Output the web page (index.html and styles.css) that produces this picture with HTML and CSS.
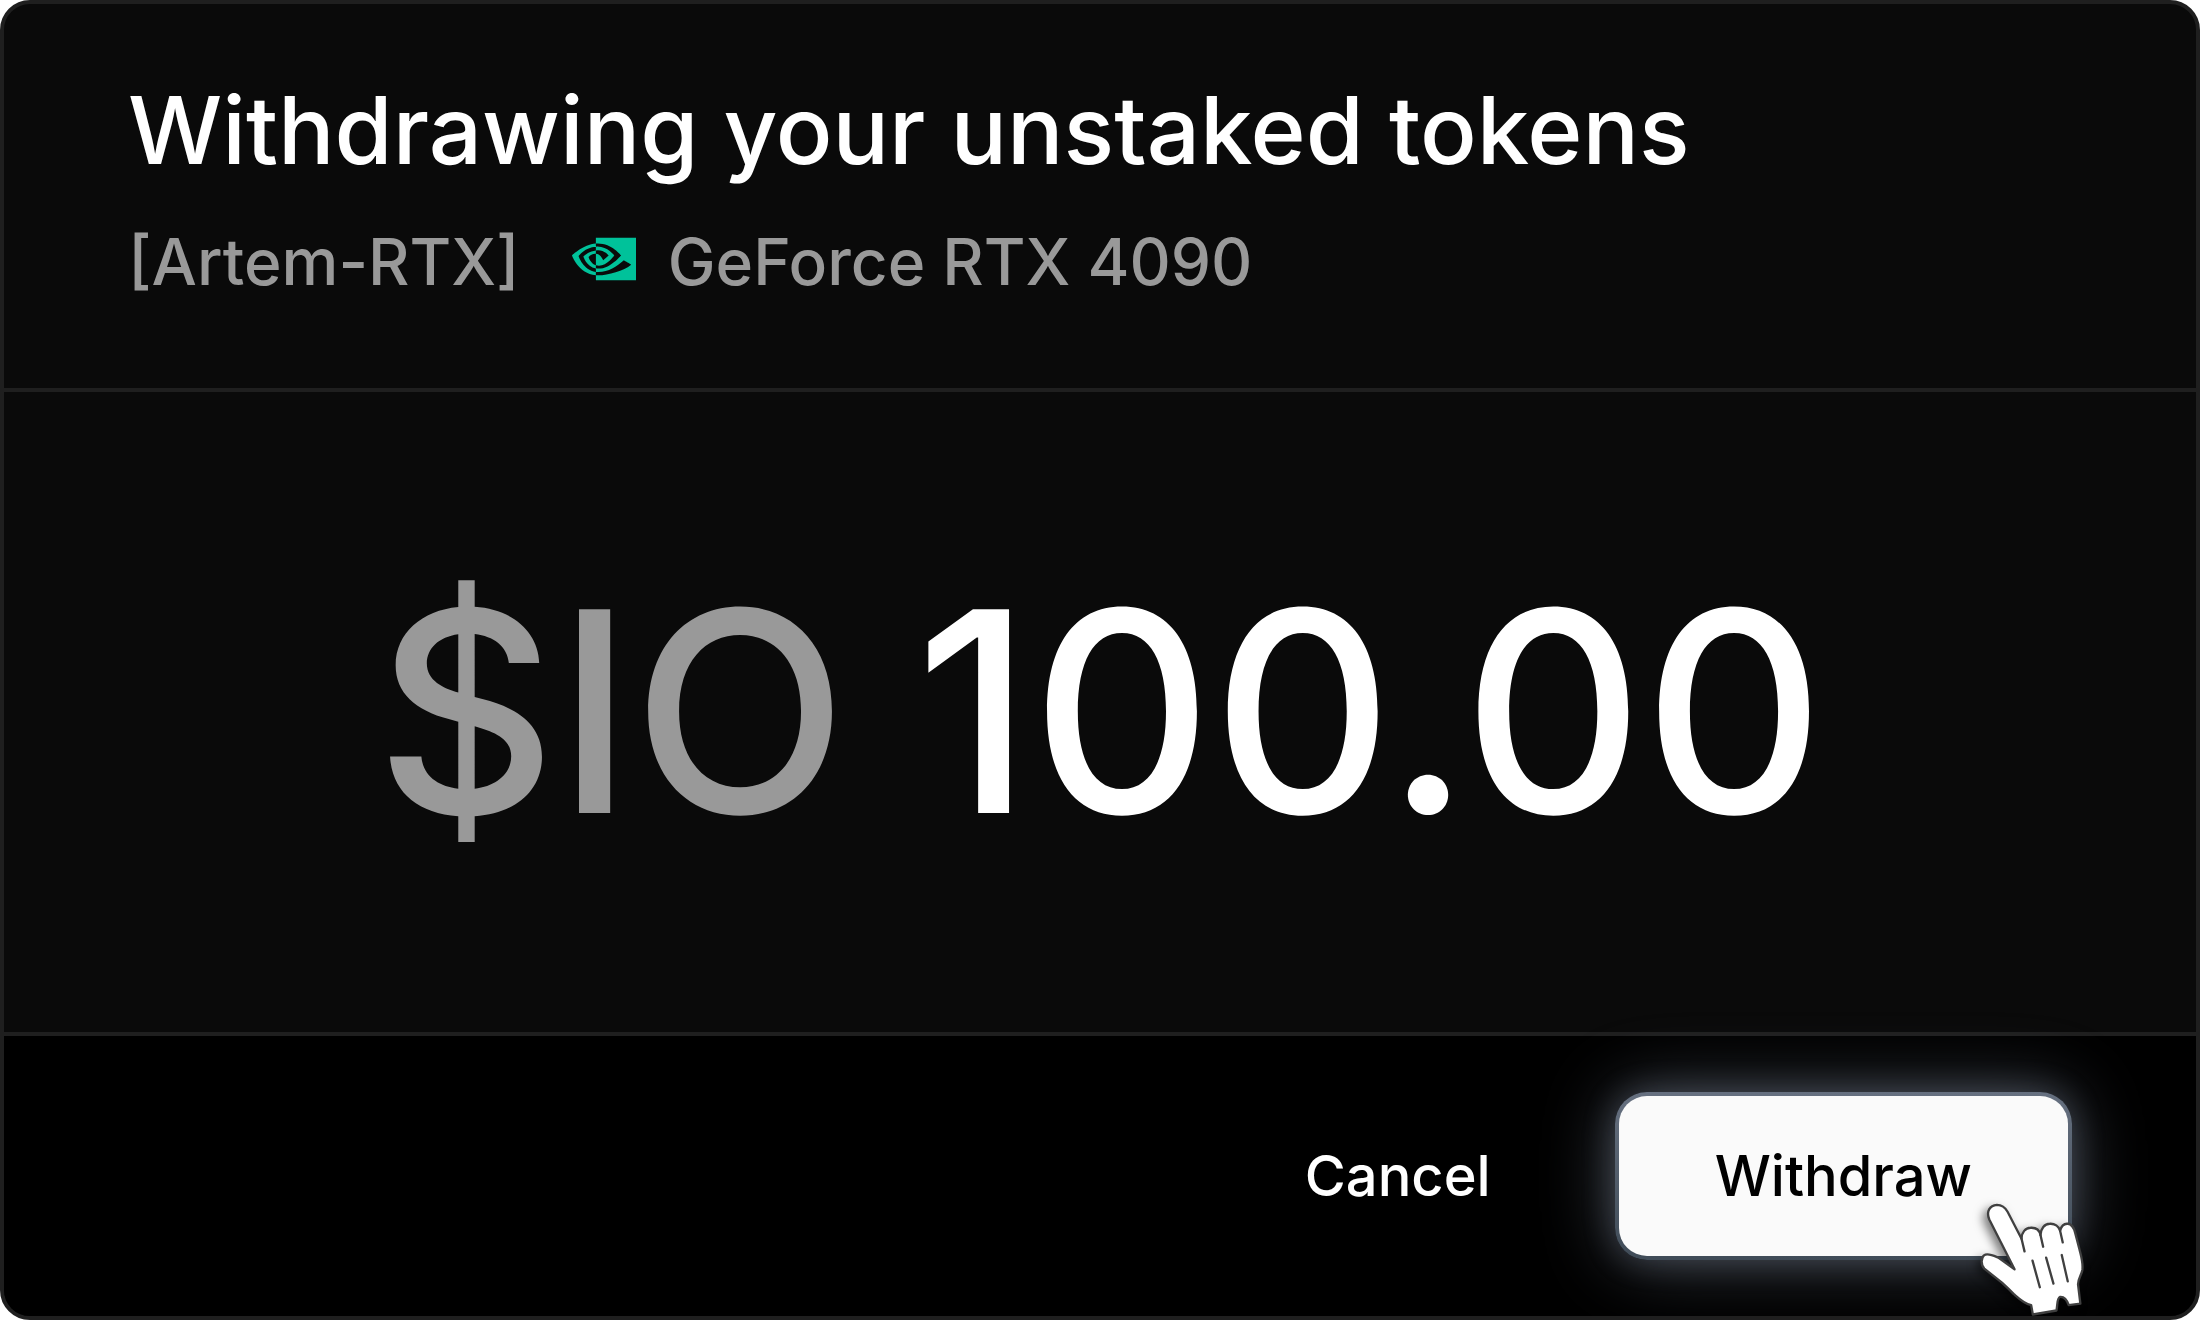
FILE: index.html
```html
<!DOCTYPE html>
<html lang="en">
<head>
<meta charset="utf-8">
<title>Withdraw tokens</title>
<link rel="stylesheet" href="styles.css">
</head>
<body>
<main class="card">
  <header class="card-header">
    <h1 class="title">Withdrawing your unstaked tokens</h1>
    <div class="device">
      <span>[Artem-RTX]</span>
      <svg class="device-logo" viewBox="0 4 24 16" aria-hidden="true"><path d="M8.948 8.798v-1.43a6.7 6.7 0 0 1 .424-.018c3.922-.124 6.493 3.374 6.493 3.374s-2.774 3.851-5.75 3.851c-.398 0-.787-.062-1.158-.185v-4.346c1.528.185 1.837.857 2.747 2.385l2.04-1.714s-1.492-1.952-4-1.952a6.016 6.016 0 0 0-.796.035m0-4.735v2.138l.424-.027c5.45-.185 9.01 4.47 9.01 4.47s-4.08 4.964-8.33 4.964c-.37 0-.733-.035-1.095-.097v1.325c.3.035.61.062.91.062 3.957 0 6.82-2.023 9.593-4.408.459.371 2.34 1.263 2.73 1.652-2.633 2.208-8.772 3.984-12.253 3.984-.335 0-.653-.018-.971-.053v1.864H24V4.063zm0 10.326v1.131c-3.657-.654-4.673-4.46-4.673-4.46s1.758-1.944 4.673-2.262v1.237H8.94c-1.528-.186-2.73 1.245-2.73 1.245s.68 2.412 2.739 3.11M2.456 10.9s2.164-3.197 6.5-3.533V6.201C4.153 6.59 0 10.653 0 10.653s2.35 6.802 8.948 7.42v-1.237c-4.84-.6-6.492-5.936-6.492-5.936z"/></svg>
      <span>GeForce RTX 4090</span>
    </div>
  </header>
  <section class="amount">
    <span class="currency">$IO</span>
    <span>100.00</span>
  </section>
  <footer class="actions">
    <button class="button button-plain" type="button">Cancel</button>
    <div class="confirm">
      <button class="button button-primary" type="button">Withdraw</button>
      <svg class="pointer" viewBox="80 60 340 360" aria-hidden="true">
        <path class="pointer-hand" d="M193 268L117 118C107 94 118 76 140 74C156 74 166 84 172 95L214 176C214 157 226 143 241 143C257 142 268 150 271 165C272 145 283 131 299 131C314 130 326 139 330 152C334 137 342 130 353 131C365 132 371 142 375 157L388 207C395 235 400 250 397 270C394 287 384 296 384 313L391 371L356 376C351 361 342 350 330 351C320 354 323 374 319 392L248 404L243 376C222 372 207 357 190 342C177 328 167 319 155 308L102 266C91 255 92 234 101 226C112 218 130 227 144 233Z"/>
        <path class="pointer-lines" d="M214 176L223 214M271 165L279 200M330 152L338 187M247 242L269 322M288 233L310 311M335 225L353 304"/>
      </svg>
    </div>
  </footer>
</main>
</body>
</html>
```
FILE: styles.css
```css
* {
  box-sizing: border-box;
}

body {
  margin: 0;
  background: #fff;
  color: #fff;
  font-family: Inter, "Liberation Sans", sans-serif;
  font-weight: 500;
}

.card {
  border: 4px solid #1f1f1f;
  border-radius: 30px;
  background: #0a0a0a;
  overflow: hidden;
}

.card-header {
  padding: 66px 124px 82px;
  border-bottom: 4px solid #1f1f1f;
}

.title {
  margin: 0;
  font-size: 94px;
  font-weight: 500;
  line-height: 120px;
}

.device {
  display: flex;
  align-items: center;
  margin-top: 28px;
  color: #999;
  font-size: 64px;
  line-height: 88px;
}

.device-logo {
  width: 64px;
  height: 44px;
  margin: 0 32px 6px 52px;
  fill: #00c29a;
}

.amount {
  display: flex;
  justify-content: center;
  align-items: center;
  gap: 68px;
  padding: 140px 124px;
  font-size: 280px;
  line-height: 360px;
}

.currency {
  color: #999;
}

.actions {
  display: flex;
  justify-content: flex-end;
  align-items: center;
  gap: 24px;
  padding: 56px 124px;
  border-top: 4px solid #1f1f1f;
  background: #000;
}

.button {
  height: 168px;
  padding: 0 96px;
  border: 4px solid transparent;
  border-radius: 32px;
  background: transparent;
  color: #fff;
  font: inherit;
  font-size: 56px;
  line-height: 80px;
}

.confirm {
  position: relative;
}

.button-primary {
  background: linear-gradient(#fafafa, #fafafa) padding-box, linear-gradient(#667080, #3f4b57) border-box;
  color: #000;
  box-shadow: 0 0 32px rgba(140, 152, 175, 0.28), 0 0 72px rgba(140, 152, 172, 0.48);
}

.pointer {
  position: absolute;
  right: -18px;
  bottom: -60px;
  width: 113px;
  height: 120px;
  overflow: visible;
  filter: drop-shadow(-4px 4px 5px rgba(0, 0, 0, 0.5));
}

.pointer-hand {
  fill: #fff;
  stroke: #404040;
  stroke-width: 7;
  stroke-linejoin: round;
}

.pointer-lines {
  fill: none;
  stroke: #404040;
  stroke-width: 7;
  stroke-linecap: round;
}
```
